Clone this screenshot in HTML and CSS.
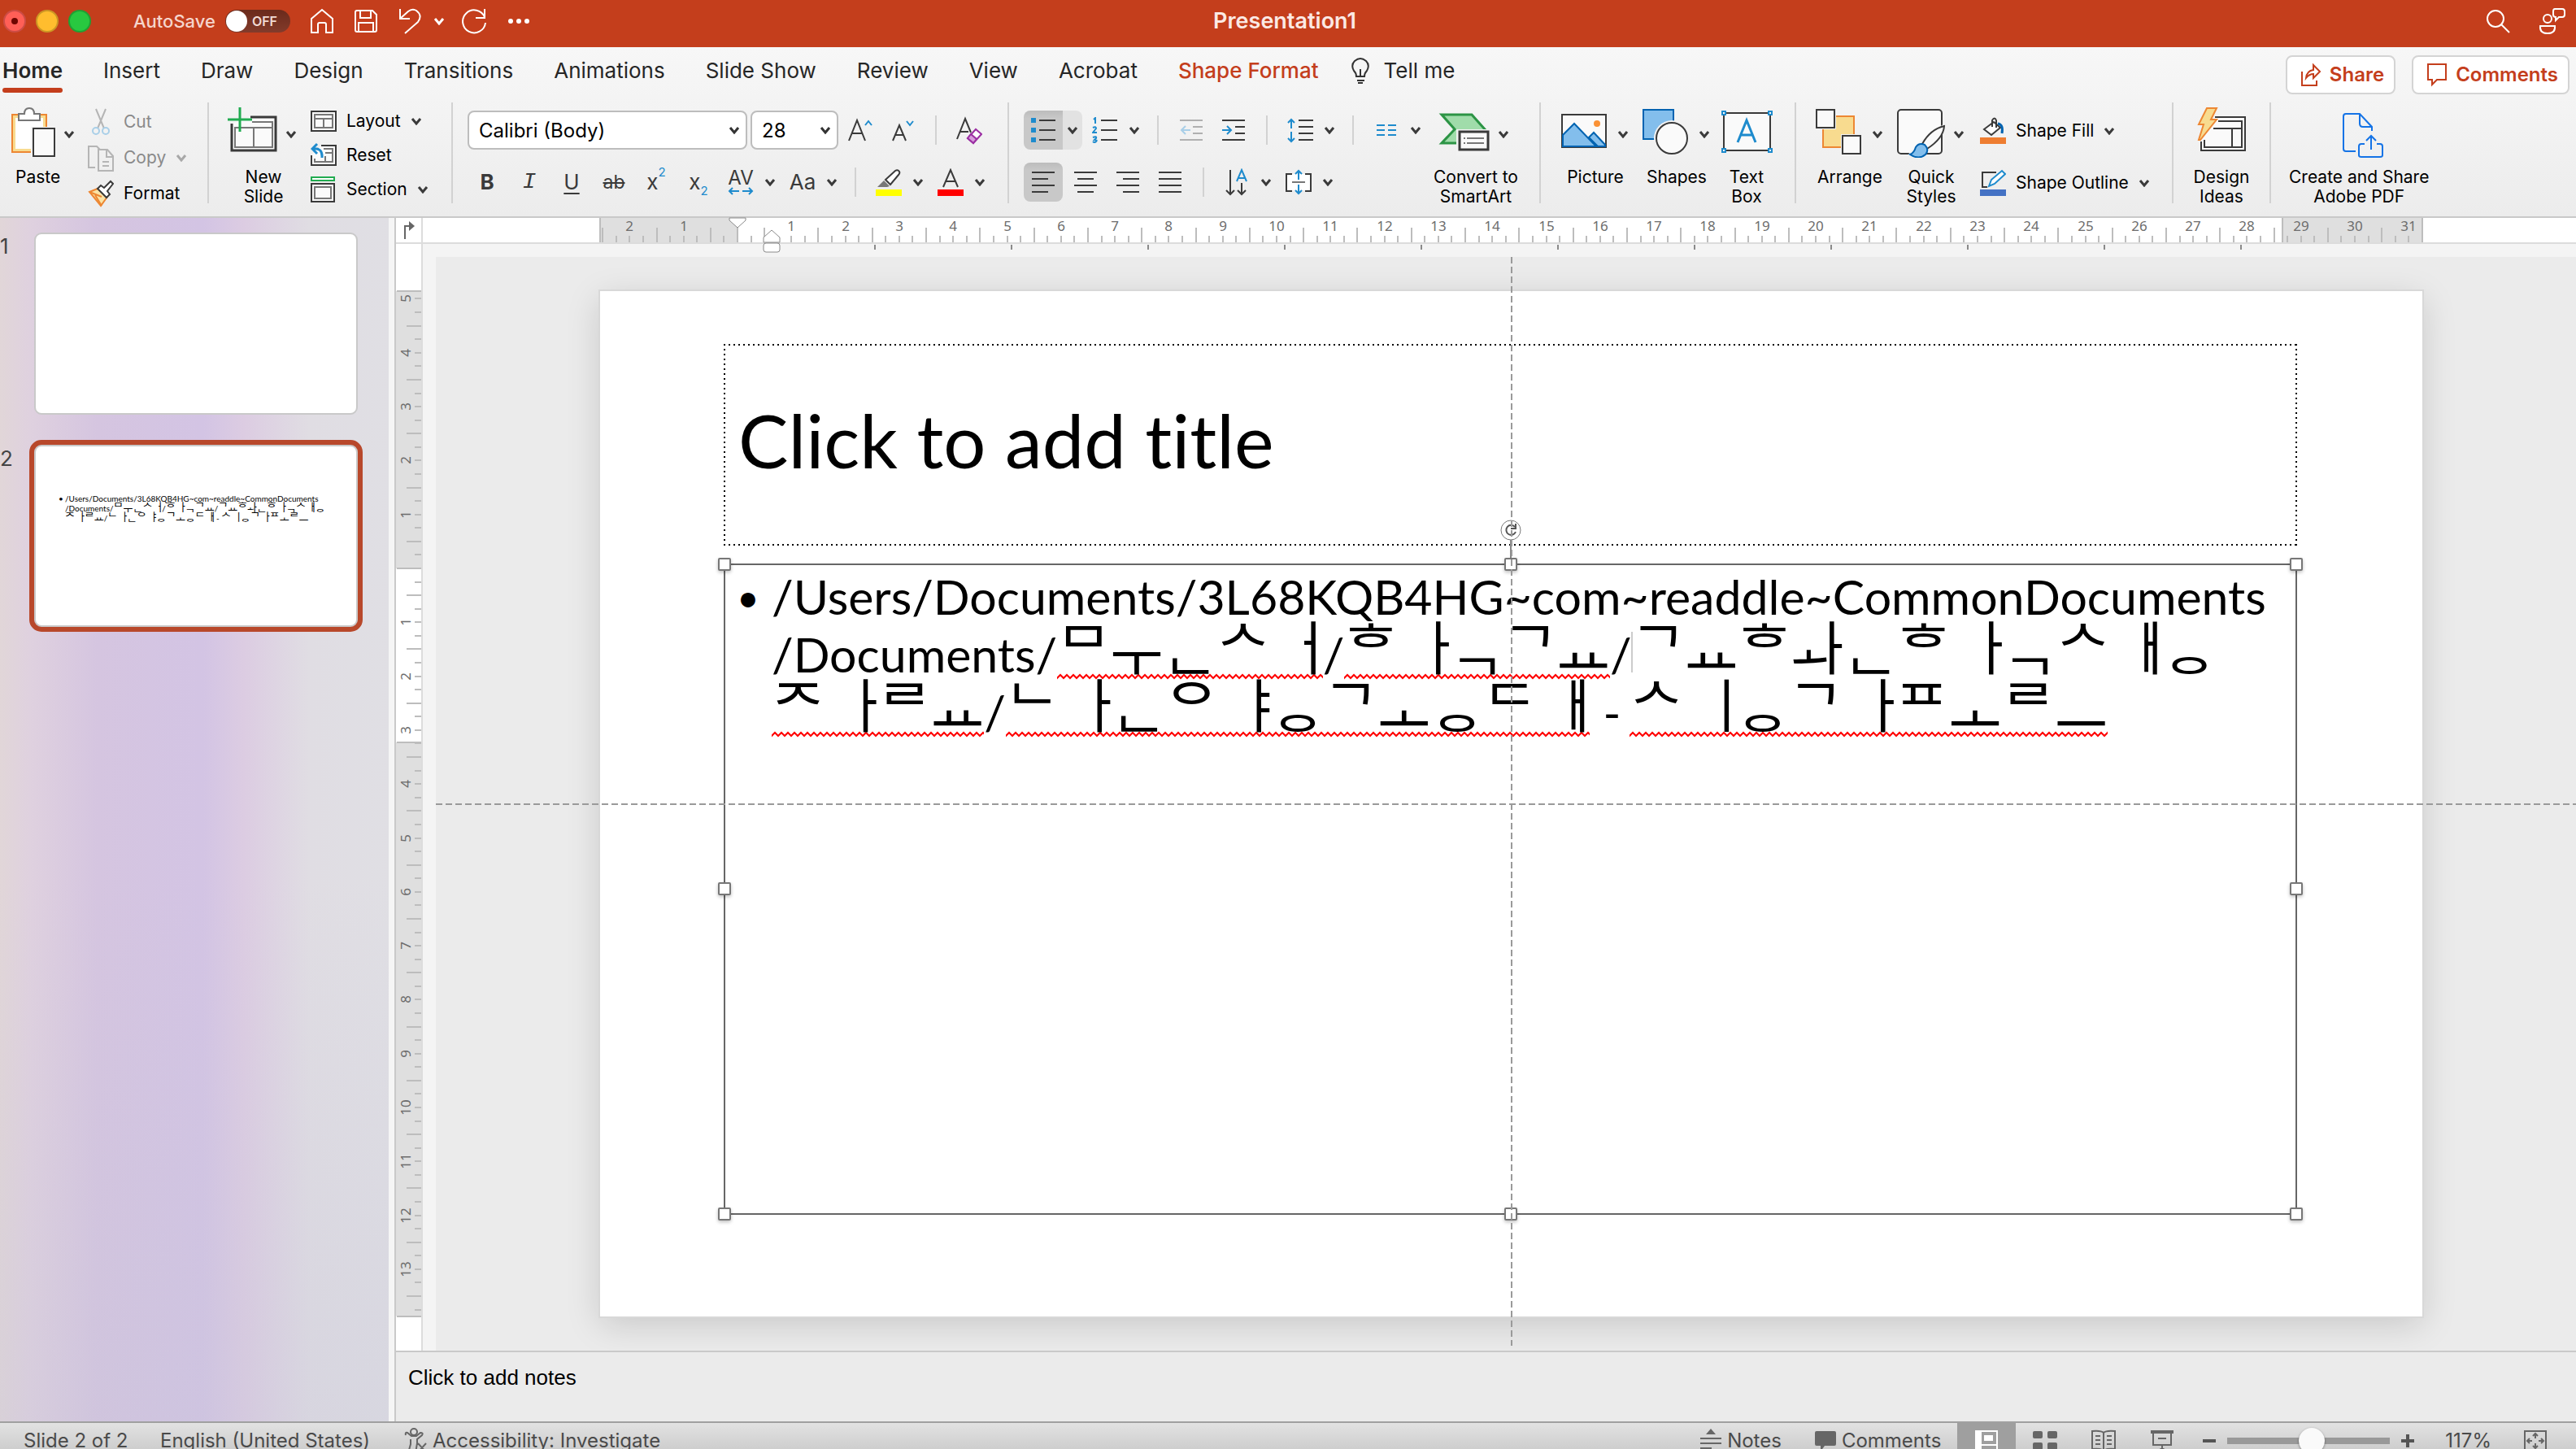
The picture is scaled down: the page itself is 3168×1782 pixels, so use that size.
FILE: index.html
```html
<!DOCTYPE html>
<html lang="en">
<head>
  <meta charset="UTF-8">
  <meta name="viewport" content="width=device-width, initial-scale=1.0">
  <title>Presentation1</title>
  <link rel="stylesheet" href="styles.css">
</head>
<body>

<svg class="defs" width="0" height="0" aria-hidden="true">
  <symbol id="chev" viewBox="0 0 14 10"><path d="M2 2l5 6 5-6" fill="none" stroke="currentColor" stroke-width="3"/></symbol>
</svg>

<div class="app">

  <header class="titlebar">
    <div class="titlebar-side">
      <div class="lights">
        <span class="light light-close"></span>
        <span class="light light-min"></span>
        <span class="light light-max"></span>
      </div>
      <label class="autosave" for="autosave">AutoSave
        <span class="switch"><input type="checkbox" id="autosave"><span class="switch-knob"></span><span class="switch-text">OFF</span></span>
      </label>
      <div class="quick">
        <button type="button" aria-label="Home"><svg width="30" height="34" viewBox="0 0 30 34"><path d="M2 14L15 3l13 11v17h-8V21q0-2-2-2h-6q-2 0-2 2v10H2z"/></svg></button>
        <button type="button" aria-label="Save"><svg width="30" height="34" viewBox="0 0 30 34"><path d="M4 4h19l5 5v19q0 2-2 2H4q-2 0-2-2V6q0-2 2-2zM8 4v9h13V4M6 30V19h18v11"/></svg></button>
        <button type="button" aria-label="Undo"><svg width="30" height="34" viewBox="0 0 30 34"><path d="M3 2v12h12M3 14L13 5q5-4 10-1 8 6 2 14L9 32"/></svg></button>
        <button type="button" class="quick-chev" aria-label="Undo list"><svg width="14" height="10"><use href="#chev"/></svg></button>
        <button type="button" aria-label="Redo"><svg width="34" height="34" viewBox="0 0 34 34"><path d="M30 2v11H19M30 12A14 14 0 1 0 31 19"/></svg></button>
        <button type="button" aria-label="More"><svg width="28" height="34" viewBox="0 0 28 34"><g fill="#fff" stroke="none"><circle cx="4" cy="17" r="3"/><circle cx="14" cy="17" r="3"/><circle cx="24" cy="17" r="3"/></g></svg></button>
      </div>
    </div>
    <h1 class="titlebar-name">Presentation1</h1>
    <div class="titlebar-side titlebar-right">
      <button type="button" aria-label="Search"><svg width="32" height="34" viewBox="0 0 32 34"><circle cx="13" cy="14" r="10"/><path d="M20 21l10 10"/></svg></button>
      <button type="button" aria-label="Presence"><svg width="34" height="36" viewBox="0 0 34 36"><circle cx="11" cy="15" r="5"/><path d="M2 24h18q1 9-9 9T2 24zM20 3h9q3 0 3 3v4q0 3-3 3h-4l-4 4v-4q-3 0-3-3V6q0-3 2-3z"/></svg></button>
    </div>
  </header>

  <nav class="tabs">
    <a href="#" class="tab tab-active">Home</a>
    <a href="#" class="tab">Insert</a>
    <a href="#" class="tab">Draw</a>
    <a href="#" class="tab">Design</a>
    <a href="#" class="tab">Transitions</a>
    <a href="#" class="tab">Animations</a>
    <a href="#" class="tab">Slide Show</a>
    <a href="#" class="tab">Review</a>
    <a href="#" class="tab">View</a>
    <a href="#" class="tab">Acrobat</a>
    <a href="#" class="tab tab-context">Shape Format</a>
    <a href="#" class="tab tab-tell"><svg width="22" height="34" viewBox="0 0 22 34" fill="none" stroke="#333" stroke-width="2"><path d="M6 24q0-4-3-7-4-7 1-12 7-6 14 0 5 5 1 12-3 3-3 7zM7 29h9M8 32h6M11 23v-8"/></svg>Tell me</a>
    <div class="tabs-actions">
      <button type="button" class="action"><svg width="26" height="30" viewBox="0 0 26 30"><path d="M2 11v17h18v-6M7 19q1-9 9-10V3l8 8-8 8v-5q-5 0-9 5z"/></svg>Share</button>
      <button type="button" class="action"><svg width="26" height="30" viewBox="0 0 26 30"><path d="M2 2h22v19H13l-6 6v-6H2z"/></svg>Comments</button>
    </div>
  </nav>

  <div class="ribbon">
    <section class="group group-clip">
      <button type="button" class="big paste">
        <span class="big-top">
          <svg width="56" height="64" viewBox="0 0 56 64" fill="#fff" stroke-width="2"><path d="M2 11h42v46H2z" fill="#f8db8f" stroke="#ed8733"/><path d="M6 15h34v38H6z" stroke="none"/><path d="M10 18v-8h7q0-7 6-7t6 7h7v8z" stroke="#777"/><path d="M25 26h31v38H25z" fill="#f3f3f3" stroke="none"/><path d="M28 28h26v34H28z" fill="#fafafa" stroke="#3a3a3a"/></svg>
          <svg class="chev" width="14" height="10"><use href="#chev"/></svg>
        </span>
        <span>Paste</span>
      </button>
      <div class="stack">
        <button type="button" class="line" disabled><svg width="32" height="36" viewBox="0 0 32 36" fill="none" stroke="#b5b5b5" stroke-width="2"><path d="M10 2l10 24M22 2L12 26"/><g stroke="#a9cfe8"><circle cx="10" cy="29" r="4"/><circle cx="22" cy="29" r="4"/></g></svg>Cut</button>
        <button type="button" class="line" disabled><svg width="32" height="36" viewBox="0 0 32 36" fill="none" stroke="#b5b5b5" stroke-width="2"><path d="M9 30H1V4h10l4 4M13 8h11l7 8v18H13zM23 8v9h8M18 23h8M18 28h8"/></svg>Copy<svg class="chev" width="14" height="10"><use href="#chev"/></svg></button>
        <button type="button" class="line"><svg width="32" height="36" viewBox="0 0 32 36" fill="#fff" stroke-width="2"><path d="M2 16l10-4 12 10-8 11z" fill="#fbe3a5" stroke="#ed8733"/><path d="M2 16l15 6M9 20l8 13" stroke="#ed8733"/><path d="M12 12l4-4 4 3 8-8 3 3-7 9 3 4-4 4z" stroke="#3a3a3a"/></svg>Format</button>
      </div>
    </section>

    <section class="group group-slides">
      <button type="button" class="big">
        <span class="big-top">
          <svg width="64" height="64" viewBox="0 0 64 64" fill="none" stroke-width="2"><path d="M30 14h31v41H7V22" fill="#fafafa" stroke="#3a3a3a" stroke-width="3"/><path d="M32 20h25v31H11V27h46M34 27v24" stroke="#777"/><path d="M17 2v30M2 17h30" stroke="#21ab50" stroke-width="3"/></svg>
          <svg class="chev" width="14" height="10"><use href="#chev"/></svg>
        </span>
        <span>New<br>Slide</span>
      </button>
      <div class="stack">
        <button type="button" class="line"><svg width="32" height="32" viewBox="0 0 32 32" fill="none" stroke="#777" stroke-width="2"><path d="M1 4h30v24H1z" fill="#fafafa" stroke="#3a3a3a"/><path d="M5 8h22v16H5zM5 13h22M16 13v11"/></svg>Layout<svg class="chev" width="14" height="10"><use href="#chev"/></svg></button>
        <button type="button" class="line"><svg width="32" height="32" viewBox="0 0 32 32" fill="none" stroke="#777" stroke-width="2"><path d="M13 4h18v24H1V16" fill="#fafafa" stroke="#3a3a3a"/><path d="M5 20v4h22V8H16M18 13h9M18 17v7"/><path d="M8 2L2 8l6 6M2 8q13-2 12 11" stroke="#1e8bcd" stroke-width="3"/></svg>Reset</button>
        <button type="button" class="line"><svg width="32" height="32" viewBox="0 0 32 32" fill="none" stroke="#777" stroke-width="2"><path d="M1 1h28v4H1z" fill="#fff" stroke="#21ab50"/><path d="M1 9h28v22H1z" fill="#fafafa" stroke="#3a3a3a"/><path d="M5 13h20v14H5z"/></svg>Section<svg class="chev" width="14" height="10"><use href="#chev"/></svg></button>
      </div>
    </section>

    <section class="group group-font">
      <div class="tools">
        <select class="combo combo-font" aria-label="Font"><option>Calibri (Body)</option></select>
        <select class="combo combo-size" aria-label="Font size"><option>28</option></select>
        <button type="button" class="tool" aria-label="Grow font"><svg width="32" height="32" viewBox="0 0 32 32" fill="none" stroke="#3a3a3a" stroke-width="2"><path d="M2 29L12 4l10 25M6 20h12"/><path d="M22 10l4-5 4 5" stroke="#1e8bcd"/></svg></button>
        <button type="button" class="tool" aria-label="Shrink font"><svg width="32" height="32" viewBox="0 0 32 32" fill="none" stroke="#3a3a3a" stroke-width="2"><path d="M4 29l8-19 8 19M7 22h10"/><path d="M21 5l4 5 4-5" stroke="#1e8bcd"/></svg></button>
        <span class="sep"></span>
        <button type="button" class="tool" aria-label="Clear formatting"><svg width="32" height="36" viewBox="0 0 32 36" fill="none" stroke="#3a3a3a" stroke-width="2"><path d="M1 29L11 4l7 17M5 20h10"/><path d="M14 28l10-11 7 6-10 11z" fill="#fff" stroke="#9b2fa3"/><path d="M14 28l4-5 7 6-4 5z" fill="#d69bdb" stroke="#9b2fa3"/></svg></button>
      </div>
      <div class="tools">
        <button type="button" class="tool glyph"><b>B</b></button>
        <button type="button" class="tool glyph glyph-i">I</button>
        <button type="button" class="tool glyph"><u>U</u></button>
        <button type="button" class="tool glyph glyph-s"><s>ab</s></button>
        <button type="button" class="tool glyph">x<sup>2</sup></button>
        <button type="button" class="tool glyph">x<sub>2</sub></button>
        <div class="split">
          <button type="button" class="tool glyph glyph-av">AV<svg width="32" height="10" viewBox="0 0 32 10" fill="none" stroke="#1e8bcd" stroke-width="2"><path d="M14 5H2M6 1L2 5l4 4M18 5h12M26 1l4 4-4 4"/></svg></button>
          <button type="button" class="drop" aria-label="Spacing options"><svg width="14" height="10"><use href="#chev"/></svg></button>
        </div>
        <div class="split">
          <button type="button" class="tool glyph glyph-aa">Aa</button>
          <button type="button" class="drop" aria-label="Case options"><svg width="14" height="10"><use href="#chev"/></svg></button>
        </div>
        <span class="sep"></span>
        <div class="split">
          <button type="button" class="tool" aria-label="Highlight"><svg width="32" height="34" viewBox="0 0 32 34"><path d="M0 26h32v8H0z" fill="#ff0"/><path d="M12 14L24 3q3-2 5 1 1 2-1 4L18 20z" fill="#fff" stroke="#3a3a3a" stroke-width="2"/><path d="M2 23l8-8 7 7-3 1z" fill="#777"/></svg></button>
          <button type="button" class="drop" aria-label="Highlight options"><svg width="14" height="10"><use href="#chev"/></svg></button>
        </div>
        <div class="split">
          <button type="button" class="tool" aria-label="Font colour"><svg width="32" height="34" viewBox="0 0 32 34"><path d="M0 26h32v8H0z" fill="red"/><path d="M7 23l9-21 9 21M10 16h12" fill="none" stroke="#3a3a3a" stroke-width="2"/></svg></button>
          <button type="button" class="drop" aria-label="Font colour options"><svg width="14" height="10"><use href="#chev"/></svg></button>
        </div>
      </div>
    </section>

    <section class="group group-para">
      <div class="rows">
        <div class="tools">
          <div class="split split-on">
            <button type="button" class="tool tool-on" aria-label="Bullets"><svg width="32" height="32" viewBox="0 0 32 32"><path d="M1 1h6v6H1zM1 13h6v6H1zM1 25h6v6H1z" fill="#1e8bcd"/><path d="M11 4h20M11 16h20M11 28h20" stroke="#3a3a3a" stroke-width="2"/></svg></button>
            <button type="button" class="drop" aria-label="Bullet options"><svg width="14" height="10"><use href="#chev"/></svg></button>
          </div>
          <div class="split">
            <button type="button" class="tool" aria-label="Numbering"><svg width="32" height="32" viewBox="0 0 32 32"><path d="M2 3l2-2v7M1 13q4-2 4 1l-4 5h5M1 25q5-2 4 1l-2 2q4 0 2 2t-4 0" fill="none" stroke="#1e8bcd" stroke-width="2"/><path d="M11 4h20M11 16h20M11 28h20" stroke="#3a3a3a" stroke-width="2"/></svg></button>
            <button type="button" class="drop" aria-label="Numbering options"><svg width="14" height="10"><use href="#chev"/></svg></button>
          </div>
          <span class="sep"></span>
          <button type="button" class="tool" disabled aria-label="Decrease indent"><svg width="28" height="32" viewBox="0 0 28 32" fill="none" stroke="#b0b0b0" stroke-width="2"><path d="M0 4h28M16 12h12M16 20h12M0 28h28"/><path d="M13 16H2M7 11l-5 5 5 5" stroke="#a9cfe8"/></svg></button>
          <button type="button" class="tool" aria-label="Increase indent"><svg width="28" height="32" viewBox="0 0 28 32" fill="none" stroke="#3a3a3a" stroke-width="2"><path d="M0 4h28M16 12h12M16 20h12M0 28h28"/><path d="M0 16h11M6 11l5 5-5 5" stroke="#1e8bcd"/></svg></button>
          <span class="sep"></span>
          <div class="split">
            <button type="button" class="tool" aria-label="Line spacing"><svg width="32" height="32" viewBox="0 0 32 32" fill="none" stroke="#3a3a3a" stroke-width="2"><path d="M14 4h18M14 12h18M14 20h18M14 28h18"/><path d="M5 14V3M1 7l4-4 4 4M5 18v12M1 26l4 4 4-4" stroke="#1e8bcd"/></svg></button>
            <button type="button" class="drop" aria-label="Line spacing options"><svg width="14" height="10"><use href="#chev"/></svg></button>
          </div>
          <span class="sep"></span>
          <div class="split">
            <button type="button" class="tool" aria-label="Columns"><svg width="24" height="16" viewBox="0 0 24 16" stroke="#1e8bcd" stroke-width="2"><path d="M0 2h10M14 2h10M0 8h10M14 8h10M0 14h10M14 14h10"/></svg></button>
            <button type="button" class="drop" aria-label="Column options"><svg width="14" height="10"><use href="#chev"/></svg></button>
          </div>
        </div>
        <div class="tools">
          <button type="button" class="tool tool-on" aria-label="Align left"><svg width="28" height="28" viewBox="0 0 28 28" stroke="#3a3a3a" stroke-width="2"><path d="M0 2h28M0 10h20M0 18h28M0 26h20"/></svg></button>
          <button type="button" class="tool" aria-label="Center"><svg width="28" height="28" viewBox="0 0 28 28" stroke="#3a3a3a" stroke-width="2"><path d="M0 2h28M4 10h20M0 18h28M4 26h20"/></svg></button>
          <button type="button" class="tool" aria-label="Align right"><svg width="28" height="28" viewBox="0 0 28 28" stroke="#3a3a3a" stroke-width="2"><path d="M0 2h28M8 10h20M0 18h28M8 26h20"/></svg></button>
          <button type="button" class="tool" aria-label="Justify"><svg width="28" height="28" viewBox="0 0 28 28" stroke="#3a3a3a" stroke-width="2"><path d="M0 2h28M0 10h28M0 18h28M0 26h28"/></svg></button>
          <span class="sep"></span>
          <div class="split">
            <button type="button" class="tool" aria-label="Text direction"><svg width="28" height="34" viewBox="0 0 28 34" fill="none" stroke="#3a3a3a" stroke-width="2"><path d="M6 2v29M1 27l5 5 5-5M20 18v13M15 27l5 5 5-5"/><path d="M14 16l6-14 6 14M16 12h8" stroke="#1e8bcd"/></svg></button>
            <button type="button" class="drop" aria-label="Text direction options"><svg width="14" height="10"><use href="#chev"/></svg></button>
          </div>
          <div class="split">
            <button type="button" class="tool" aria-label="Align text"><svg width="32" height="34" viewBox="0 0 32 34" fill="none" stroke="#3a3a3a" stroke-width="2"><path d="M2 7h28v20H2z" fill="#fff" stroke="none"/><path d="M8 7H1v21h7M24 7h7v21h-7"/><path d="M8 17h16" stroke="#777"/><path d="M16 14V3M12 7l4-4 4 4M16 20v11M12 27l4 4 4-4" stroke="#1e8bcd"/></svg></button>
            <button type="button" class="drop" aria-label="Align text options"><svg width="14" height="10"><use href="#chev"/></svg></button>
          </div>
        </div>
      </div>
      <button type="button" class="big big-art">
        <span class="big-top">
          <svg width="64" height="64" viewBox="0 0 64 64" fill="#fafafa" stroke-width="2"><path d="M4 11h37l16 18-16 17H4l16-17z" fill="#a0dcaa" stroke="#2c9445" stroke-width="3"/><path d="M22 29h42v32H22z" fill="#f2f2f2" stroke="none"/><path d="M26 32h35v22H26z" stroke="#3a3a3a" stroke-width="3"/><path d="M31 40h2M35 40h21M31 46h2M35 46h21" stroke="#777"/></svg>
          <svg class="chev" width="14" height="10"><use href="#chev"/></svg>
        </span>
        <span>Convert to<br>SmartArt</span>
      </button>
    </section>

    <section class="group group-insert">
      <button type="button" class="big">
        <span class="big-top">
          <svg width="64" height="64" viewBox="0 0 64 64" fill="#fafafa" stroke-width="2"><path d="M5 11h54v40H5z" stroke="#3a3a3a"/><path d="M6 36l14-14 27 28H6zM38 39l6-6 14 15v2H49z" fill="#83beec" stroke="#0063b1"/><circle cx="48" cy="22" r="4" fill="#fa9236"/></svg>
          <svg class="chev" width="14" height="10"><use href="#chev"/></svg>
        </span>
        <span>Picture</span>
      </button>
      <button type="button" class="big">
        <span class="big-top">
          <svg width="64" height="64" viewBox="0 0 64 64" fill="#fafafa" stroke-width="2"><path d="M5 5h37v36H5z" fill="#83beec" stroke="#0063b1"/><circle cx="40" cy="40" r="22" fill="#f2f2f2"/><circle cx="40" cy="40" r="19" stroke="#3a3a3a"/></svg>
          <svg class="chev" width="14" height="10"><use href="#chev"/></svg>
        </span>
        <span>Shapes</span>
      </button>
      <button type="button" class="big">
        <span class="big-top">
          <svg width="64" height="64" viewBox="0 0 64 64" fill="#fafafa" stroke-width="2"><path d="M4 9h57v46H4z" stroke="#3a3a3a"/><path d="M21 45l11-27 11 27M25 36h14" fill="none" stroke="#1e8bcd" stroke-width="3"/><path d="M2 7h4v4H2zM59 7h4v4h-4zM2 53h4v4H2zM59 53h4v4h-4z" stroke="#1e8bcd"/></svg>
        </span>
        <span>Text<br>Box</span>
      </button>
    </section>

    <section class="group group-arrange">
      <button type="button" class="big">
        <span class="big-top">
          <svg width="64" height="64" viewBox="0 0 64 64" fill="#fafafa" stroke-width="2"><path d="M13 13h38v38H13z" fill="#f8db8f" stroke="#ed8733"/><path d="M2 2h27v27H2zM35 35h27v27H35z" fill="#f2f2f2"/><path d="M5 5h22v22H5zM37 37h22v22H37z" stroke="#3a3a3a"/></svg>
          <svg class="chev" width="14" height="10"><use href="#chev"/></svg>
        </span>
        <span>Arrange</span>
      </button>
      <button type="button" class="big">
        <span class="big-top">
          <svg width="64" height="64" viewBox="0 0 64 64" fill="#fafafa" stroke-width="2"><rect x="5" y="5" width="54" height="54" rx="4" stroke="#3a3a3a"/><path d="M64 24L36 60 16 62l16-18 30-22z" fill="#f2f2f2"/><path d="M35 47q10-18 27-22-1 15-21 28z" stroke="#3a3a3a"/><path d="M20 60q5-2 7-9 4-6 11-3 6 6 1 12-8 7-19 0z" fill="#83beec" stroke="#0063b1"/></svg>
          <svg class="chev" width="14" height="10"><use href="#chev"/></svg>
        </span>
        <span>Quick<br>Styles</span>
      </button>
      <div class="stack stack-shape">
        <button type="button" class="line"><svg width="32" height="34" viewBox="0 0 32 34" fill="#fff" stroke="#3a3a3a" stroke-width="2"><path d="M0 25h32v8H0z" fill="#ee7d31" stroke="none"/><path d="M5 15L17 6l8 7-11 9zM15 12V4q3-5 5 0v9"/><path d="M22 8q7 1 5 12" fill="none" stroke="#0063b1" stroke-width="3"/></svg>Shape Fill<svg class="chev" width="14" height="10"><use href="#chev"/></svg></button>
        <button type="button" class="line"><svg width="32" height="34" viewBox="0 0 32 34" fill="none" stroke="#3a3a3a" stroke-width="2"><path d="M0 25h32v8H0z" fill="#4472c4" stroke="none"/><path d="M20 4H3v18h6"/><path d="M11 21l3-8L27 2l4 4-13 12z" fill="#fff" stroke="#1e8bcd"/></svg>Shape Outline<svg class="chev" width="14" height="10"><use href="#chev"/></svg></button>
      </div>
    </section>

    <section class="group group-ideas">
      <button type="button" class="big">
        <span class="big-top">
          <svg width="64" height="64" viewBox="0 0 64 64" fill="none" stroke="#3a3a3a" stroke-width="2"><path d="M24 14h37v41H7V44" fill="#fafafa"/><path d="M28 19h29v32H11V42M22 28h35M45 28v23"/><path d="M14 3h12l-7 14h7L6 42H4l6-19H4z" fill="#f8db8f" stroke="#ed8733"/></svg>
        </span>
        <span>Design<br>Ideas</span>
      </button>
    </section>

    <section class="group group-pdf">
      <button type="button" class="big">
        <span class="big-top">
          <svg width="64" height="64" viewBox="0 0 64 64" fill="none" stroke="#1473e6" stroke-width="2"><path d="M28 56H16q-3 0-3-3V13q0-3 3-3h17l15 16v5M33 10v12q0 4 4 4h11M39 47h-4q-3 0-3 3v11q0 2 3 2h23q3 0 3-2V50q0-3-3-3h-4M47 54V37M41 43l6-6 6 6"/></svg>
        </span>
        <span>Create and Share<br>Adobe PDF</span>
      </button>
    </section>
  </div>

  <main class="main">
    <aside class="sidebar">
      <ol class="slides">
        <li><span class="slide-no">1</span><div class="thumb"></div></li>
        <li><span class="slide-no">2</span><div class="thumb thumb-on"><p class="path" id="thumb-text"></p></div></li>
      </ol>
    </aside>

    <div class="editor">
      <div class="corner"><svg width="16" height="22" viewBox="0 0 16 22"><path d="M3 22V6h6" fill="none" stroke="#666" stroke-width="2"/><path d="M8 0l7 6-7 6z" fill="#666"/></svg></div>
      <svg class="ruler ruler-h" id="ruler-h"></svg>
      <svg class="ruler ruler-v" id="ruler-v"></svg>
      <div class="stage">
        <div class="canvas">
          <div class="slide" id="slide">
            <div class="holder holder-title"><h2>Click to add title</h2></div>
            <div class="holder holder-body" id="holder">
              <p class="path" id="path"><span>/Users/Documents/3L68KQB4HG~com~readdle~CommonDocuments</span><br><span>/Documents/<i class="jamo typo">&#x1106;&#x1160;&#x115F;&#x116E;&#x115F;&#x1160;&#x11AB;&#x1109;&#x1160;&#x115F;&#x1165;</i>/<i class="jamo typo">&#x1112;&#x1160;&#x115F;&#x1161;&#x115F;&#x1160;&#x11A8;&#x1100;&#x1160;&#x115F;&#x116D;</i>/<i class="caret"></i><i class="jamo">&#x1100;&#x1160;&#x115F;&#x116D;&#x1112;&#x1160;&#x115F;&#x116A;&#x115F;&#x1160;&#x11AB;&#x1112;&#x1160;&#x115F;&#x1161;&#x115F;&#x1160;&#x11A8;&#x1109;&#x1160;&#x115F;&#x1162;&#x115F;&#x1160;&#x11BC;</i></span><br><span><i class="jamo typo">&#x110C;&#x1160;&#x115F;&#x1161;&#x1105;&#x1160;&#x115F;&#x116D;</i>/<i class="jamo typo">&#x1102;&#x1160;&#x115F;&#x1161;&#x115F;&#x1160;&#x11AB;&#x110B;&#x1160;&#x115F;&#x1163;&#x115F;&#x1160;&#x11BC;&#x1100;&#x1160;&#x115F;&#x1169;&#x115F;&#x1160;&#x11BC;&#x1103;&#x1160;&#x115F;&#x1162;</i><i class="dash">-</i><i class="jamo typo">&#x1109;&#x1160;&#x115F;&#x1175;&#x115F;&#x1160;&#x11BC;&#x1100;&#x1160;&#x115F;&#x1161;&#x1111;&#x1160;&#x115F;&#x1169;&#x1105;&#x1160;&#x115F;&#x1173;</i></span></p>
              <span class="stem"></span>
              <span class="grip grip-nw"></span><span class="grip grip-n"></span><span class="grip grip-ne"></span>
              <span class="grip grip-w"></span><span class="grip grip-e"></span>
              <span class="grip grip-sw"></span><span class="grip grip-s"></span><span class="grip grip-se"></span>
              <svg class="rotate" width="26" height="26" viewBox="0 0 26 26"><circle cx="13" cy="13" r="12" fill="#fff" stroke="#777"/><path d="M18 9a6 6 0 1 0 1 6M19 5v6h-6" fill="none" stroke="#555" stroke-width="2"/></svg>
            </div>
          </div>
          <span class="guide guide-v"></span>
          <span class="guide guide-h"></span>
        </div>
      </div>
      <div class="notes">
        <textarea aria-label="Notes" rows="1">Click to add notes</textarea>
      </div>
    </div>
  </main>

  <footer class="status">
    <span class="status-slide">Slide 2 of 2</span>
    <button type="button" class="status-lang">English (United States)</button>
    <button type="button" class="status-a11y"><svg width="28" height="32" viewBox="0 0 28 32" fill="none" stroke="#666" stroke-width="2"><circle cx="12" cy="5" r="4"/><path d="M2 9q-1-4 2-3l5 4h6l5-4q4 0 2 3l-6 5v5l-2 12M8 14v6L5 31M17 19l10 11M27 19L17 30"/></svg>Accessibility: Investigate</button>
    <div class="status-right">
      <button type="button" class="status-notes"><svg width="28" height="30" viewBox="0 0 28 30"><path d="M14 0l6 7H8z" fill="#666"/><path d="M1 12h26M1 18h26M1 24h14" stroke="#666" stroke-width="2"/></svg>Notes</button>
      <button type="button" class="status-comments"><svg width="28" height="26" viewBox="0 0 28 26"><path d="M3 1h22q2 0 2 2v14q0 2-2 2H13l-5 7v-7H3q-2 0-2-2V3q0-2 2-2z" fill="#666"/></svg>Comments</button>
      <div class="views">
        <button type="button" class="view view-on" aria-label="Normal view"><svg width="30" height="26" viewBox="0 0 30 26" fill="none" stroke="#fff" stroke-width="2"><path d="M2 1h26v24H2zM8 1v24M8 18h20"/><path d="M2 1h5v24H2zM13 7h9v5h-9z" fill="#fff"/></svg></button>
        <button type="button" class="view" aria-label="Slide sorter"><svg width="30" height="26" viewBox="0 0 30 26" fill="#666"><rect y="1" width="12" height="9" rx="2"/><rect x="18" y="1" width="12" height="9" rx="2"/><rect y="15" width="12" height="9" rx="2"/><rect x="18" y="15" width="12" height="9" rx="2"/></svg></button>
        <button type="button" class="view" aria-label="Reading view"><svg width="30" height="28" viewBox="0 0 30 28" fill="none" stroke="#666" stroke-width="2"><path d="M15 4q-3-3-14-2v22q11-1 14 2 3-3 14-2V2Q18 1 15 4zv22M5 8h6M5 13h6M5 18h6M19 8h6M19 13h6M19 18h6"/></svg></button>
        <button type="button" class="view" aria-label="Slide show"><svg width="30" height="28" viewBox="0 0 30 28" fill="none" stroke="#666" stroke-width="2"><path d="M1 3h28" stroke-width="4"/><path d="M4 4v15h22V4M10 11h10M15 19v6M9 27l6-4 6 4"/></svg></button>
      </div>
      <button type="button" class="zoom-btn" aria-label="Zoom out"><svg width="16" height="16" viewBox="0 0 16 16"><path d="M0 8h16" stroke="#555" stroke-width="4"/></svg></button>
      <input type="range" class="zoom" min="0" max="100" value="52" aria-label="Zoom">
      <button type="button" class="zoom-btn" aria-label="Zoom in"><svg width="16" height="16" viewBox="0 0 16 16"><path d="M0 8h16M8 0v16" stroke="#555" stroke-width="4"/></svg></button>
      <button type="button" class="zoom-level">117%</button>
      <button type="button" class="zoom-fit" aria-label="Fit to window"><svg width="28" height="26" viewBox="0 0 28 26" fill="none" stroke="#666" stroke-width="2"><path d="M1 1h26v24H1zM14 5v5M14 16v5M5 13h5M18 13h5"/><path d="M11 7l3-3 3 3M11 19l3 3 3-3M7 10l-3 3 3 3M21 10l3 3-3 3"/></svg></button>
    </div>
  </footer>

</div>

<script src="script.js"></script>
</body>
</html>
```
FILE: styles.css
```css
*{box-sizing: border-box;}
html,body{margin: 0; padding: 0; height: 100%; overflow: hidden;}
body{font-family: Inter, "Liberation Sans", sans-serif; font-size: 22px; line-height: 24px; color: #000; background-color: #ebebeb;}
button{margin: 0; padding: 0; border: 0; background: none; font: inherit; color: inherit; white-space: nowrap;}
svg{display: block; flex: none;}
a{color: inherit; text-decoration: none;}
.defs{position: absolute;}

/* the status bar runs a little below the window edge */
.app{display: flex; flex-direction: column; height: calc(100% + 12px);}

/* title bar */
.titlebar{display: flex; align-items: center; height: 58px; padding: 0 12px 6px 4px; background-color: #c43e1c; color: #fff;}
.titlebar svg{fill: none; stroke: #fff; stroke-width: 2;}
.titlebar-side{display: flex; flex: 1; align-items: center;}
.titlebar-right{justify-content: flex-end; gap: 34px;}
.titlebar-name{margin: 0; font-size: 27px; font-weight: 600; color: #fbe9e4;}
.lights{display: flex; gap: 12px;}
.light{display: flex; width: 28px; height: 28px; border: 2px solid rgba(0,0,0,0.2); border-radius: 50%; align-items: center; justify-content: center;}
.light-close{background-color: #ff5f57;}
.light-close::after{content: ""; width: 8px; height: 8px; border-radius: 50%; background-color: #6e0600;}
.light-min{background-color: #ffbd2e;}
.light-max{background-color: #28c840;}
.autosave{display: flex; align-items: center; gap: 12px; margin-left: 52px; font-size: 22px; font-weight: 500; color: #f5d5cc;}
.switch{display: flex; position: relative; align-items: center; width: 80px; height: 28px; border-radius: 14px; background: linear-gradient(#6b2a1b, #823b2b);}
.switch input{position: absolute; inset: 0; margin: 0; opacity: 0;}
.switch-knob{width: 26px; height: 26px; margin-left: 1px; border-radius: 50%; background-color: #fff;}
.switch-text{margin-left: 6px; font-size: 16px; font-weight: 600; color: #f1dad4;}
.quick{display: flex; align-items: center; gap: 24px; margin-left: 24px;}
.quick-chev{margin: 0 -5px 0 -10px;}

/* tabs */
.tabs{display: flex; align-items: center; gap: 50px; height: 62px; padding: 0 8px 4px 3px; background: linear-gradient(#f7f7f7, #f4f4f4); font-size: 26px; line-height: 30px; color: #262626;}
.tab{display: flex; align-items: center; white-space: nowrap;}
.tab-active{position: relative; font-weight: 600;}
.tab-active::after{content: ""; position: absolute; left: 0; right: 0; bottom: -12px; height: 6px; border-radius: 3px; background-color: #c43e1c;}
.tab-context{font-weight: 500; color: #c43e1c;}
.tab-tell{gap: 18px; margin-left: -10px;}
.tabs-actions{display: flex; gap: 20px; margin-left: auto; align-self: flex-end;}
.action{display: flex; align-items: center; gap: 10px; height: 48px; padding: 0 12px 0 16px; border: 2px solid #d4d4d4; border-radius: 8px; background-color: #fff; font-size: 24px; font-weight: 600; color: #c43e1c;}
.action svg{fill: none; stroke: #c43e1c; stroke-width: 2;}

/* ribbon */
.ribbon{display: flex; height: 148px; padding: 6px 0 16px; border-bottom: 2px solid #c9c9c9; background: linear-gradient(#f4f4f4, #ececec);}
.group{display: flex; border-right: 2px solid #d2d2d2; padding-top: 4px;}
.group-clip{width: 257px; padding-left: 13px;}
.group-slides{width: 300px; padding-left: 21px;}
.group-font{width: 684px; padding: 10px 0 0 16px; flex-direction: column; gap: 16px;}
.group-para{width: 654px; padding-left: 16px;}
.group-insert{width: 314px; padding-left: 21px; gap: 8px;}
.group-arrange{width: 464px; padding-left: 20px; gap: 8px;}
.group-ideas{width: 120px; justify-content: center;}
.group-pdf{padding-left: 22px; border-right: 0;}
.big{display: flex; flex-direction: column; align-items: center; align-self: flex-start; gap: 12px; font-size: 21px;}
.big-top{display: flex; align-items: center; gap: 9px; height: 64px;}
.big .chev{margin: 6px 5px 0 0;}
.paste{align-items: flex-start; width: 84px; margin-right: 11px;}
.paste > span:last-child{padding-left: 6px;}
.chev,.drop{color: #3a3a3a;}
.stack{display: flex; flex-direction: column; gap: 8px; padding-top: 2px;}
.group-slides .stack{margin-left: 12px;}
.line{display: flex; align-items: center; gap: 12px; height: 36px; font-size: 21px;}
.line:disabled{color: #8a8a8a;}
.line:disabled .chev{color: #a8a8a8;}
.stack-shape{margin-left: 6px; padding-top: 13px; gap: 28px;}
.rows{display: flex; flex-direction: column; gap: 16px; width: 498px; padding-top: 6px;}
.big-art{margin-left: 8px;}
.tools{display: flex; align-items: center; height: 48px;}
.tool{display: flex; align-items: center; justify-content: center; width: 48px; height: 48px; margin: 0 2px; border-radius: 8px;}
.tool-on{background: linear-gradient(#bcbcbc, #c8c8c8 20%);}
.split{display: flex; margin-right: 2px;}
.split .tool{margin-right: 0;}
.split-on .tool{border-radius: 8px 0 0 8px;}
.split-on .drop{border-radius: 0 8px 8px 0; background-color: #e2e2e2;}
.drop{display: flex; align-items: center; justify-content: center; width: 24px; height: 48px;}
.sep{width: 2px; height: 36px; margin: 0 14px; background-color: #d2d2d2;}
.combo{height: 48px; margin-left: 2px; padding: 0 12px; border: 2px solid #bdbdbd; border-radius: 8px; appearance: none; font-family: inherit; font-size: 24px; color: #000;
  background: #fff url('data:image/svg+xml,<svg xmlns="http://www.w3.org/2000/svg" width="14" height="10"><path d="M2 2l5 6 5-6" fill="none" stroke="%23333" stroke-width="3"/></svg>') no-repeat right 7px center;}
.combo-font{width: 344px;}
.combo-size{width: 108px; margin: 0 1px 0 4px;}
.glyph{font-size: 26px; color: #3a3a3a;}
.glyph u{text-underline-offset: 4px;}
.glyph-i{font-family: "Liberation Mono", monospace; font-style: italic; font-size: 28px;}
.glyph-s{font-size: 23px;}
.glyph sup,.glyph sub{font-size: 15px; line-height: 15px; color: #1e8bcd;}
.glyph sup{align-self: flex-start; padding-top: 4px;}
.glyph sub{align-self: flex-end; padding-bottom: 6px;}
.glyph-av{flex-direction: column; font-size: 24px; line-height: 22px;}

/* thumbnails */
.main{display: flex; flex: 1; min-height: 0;}
.sidebar{width: 487px; border-right: 2px solid #c9c9c9; box-shadow: inset -7px 0 #f5f5f5;
  background: linear-gradient(rgba(200,200,205,0) 55%, rgba(195,195,215,0.3)), linear-gradient(90deg, #e1d6d8, #dfd1df 36px, #d5c5e0 120px, #d3c4e4 250px, #dccce2 300px, #e0dde3 380px, #e0dfe4);}
.slides{display: flex; flex-direction: column; gap: 37px; margin: 0; padding: 18px 0 0; list-style: none;}
.slides li{display: flex; align-items: flex-start;}
.slide-no{width: 42px; padding-top: 5px; font-size: 26px; color: #444;}
.thumb{width: 398px; aspect-ratio: 16 / 9; border: 2px solid #c9c9c9; border-radius: 9px; background-color: #fff;}
.thumb-on{padding: 58px 0 0 28px; outline: 6px solid #b8482b;}

/* editor */
.editor{display: grid; flex: 1; min-width: 0; grid-template-columns: 33px 1fr; grid-template-rows: 32px 1fr 87px;}
.corner{display: flex; align-items: center; justify-content: center; border-right: 2px solid #dcdcdc; border-bottom: 2px solid #dcdcdc; background-color: #fff;}
.ruler{width: 100%; height: 100%; background-color: #fff; overflow: visible;}
.ruler text{font: 17px "Noto Sans", sans-serif; fill: #6d6d6d; text-anchor: middle;}
.ruler-h{border-bottom: 2px solid #dcdcdc; position: relative; z-index: 1;}
.ruler-v{border-right: 2px solid #dcdcdc; min-height: 0;}
.stage{padding: 16px 0 0 16px; background-color: #f4f4f4; min-width: 0; min-height: 0;}
.canvas{position: relative; height: 100%; padding: 42px 189px 0 202px; background-color: #ebebeb; overflow: hidden;}
.slide{display: flex; flex-direction: column; gap: 22px; aspect-ratio: 16 / 9; padding: 65px 154px 125px 152px; background-color: #fff; box-shadow: 0 0 0 2px #d8d8d8, 0 10px 40px rgba(0,0,0,0.15);}
.holder-title{flex: 0 0 248px; display: flex; align-items: center; padding: 0 18px 12px;
  background:
    repeating-linear-gradient(90deg, #000 0 2px, transparent 2px 6px) top / 100% 2px no-repeat,
    repeating-linear-gradient(90deg, #000 0 2px, transparent 2px 6px) bottom / 100% 2px no-repeat,
    repeating-linear-gradient(#000 0 2px, transparent 2px 6px) left / 2px 100% no-repeat,
    repeating-linear-gradient(#000 0 2px, transparent 2px 6px) right / 2px 100% no-repeat;}
.holder-title h2{margin: 0; font: 400 92px/100px Lato, sans-serif; font-variant-ligatures: none;}
.holder-body{position: relative; flex: 1; padding: 3px 16px; border: 2px solid #666;}
.path{position: relative; margin: 0; padding-left: 41px; font: 400 59px/71px Lato, "Noto Sans CJK KR", sans-serif; white-space: nowrap;}
.path::before{content: "•"; position: absolute; left: -2px; font-size: 48px;}
.path i{font-style: normal;}
.jamo{display: inline-block; height: 67px; line-height: 46px; vertical-align: 4px; font-family: "Noto Sans CJK KR", sans-serif; font-size: 71px;}
.typo{background: url('data:image/svg+xml,<svg xmlns="http://www.w3.org/2000/svg" width="8" height="8"><path d="M-1 7l5-5 5 5" fill="none" stroke="red" stroke-width="2"/></svg>') repeat-x left bottom;}
.caret{display: inline-block; width: 2px; height: 50px; margin: 0 -1px; background-color: #ccc;}
.dash{display: inline-block; width: 49px; padding-left: 16px;}
.thumb .path{padding-left: 8px; font-size: 10px; line-height: 12px;}
.thumb .path::before{left: 0; font-size: 10px;}
.thumb .jamo{height: 11px; line-height: 8px; vertical-align: 1px; font-size: 13px;}
.thumb .typo{background: none;}
.thumb .dash{width: 8px; padding-left: 2px;}
.thumb .caret{display: none;}
.grip{position: absolute; width: 16px; height: 16px; margin: -8px; border: 2px solid #777; border-radius: 2px; background-color: #fff; box-shadow: 0 2px 4px rgba(0,0,0,0.25);}
.grip-nw,.grip-w,.grip-sw{left: -1px;}
.grip-n,.grip-s{left: 50%;}
.grip-ne,.grip-e,.grip-se{left: calc(100% + 1px);}
.grip-nw,.grip-n,.grip-ne{top: -1px;}
.grip-w,.grip-e{top: 50%;}
.grip-sw,.grip-s,.grip-se{top: calc(100% + 1px);}
.stem{position: absolute; left: 50%; top: -36px; width: 2px; height: 36px; margin-left: -1px; background-color: #888;}
.rotate{position: absolute; left: 50%; top: -56px; margin-left: -13px;}
.guide{position: absolute;}
.guide-v{left: calc(50% + 6px); top: 0; bottom: 6px; width: 2px; background: repeating-linear-gradient(#9a9a9a 0 8px, transparent 8px 12px);}
.guide-h{top: 672px; left: 0; right: 0; height: 2px; background: repeating-linear-gradient(90deg, #9a9a9a 0 8px, transparent 8px 12px);}
.notes{grid-column: 1 / 3; padding: 16px 15px; border-top: 2px solid #c9c9c9;}
.notes textarea{display: block; width: 100%; height: 34px; padding: 0; border: 0; background: none; resize: none; font: 26px/30px "Liberation Sans", Arial, sans-serif; color: #000;}

/* status bar */
.status{display: flex; align-items: center; height: 46px; padding: 0 36px 0 29px; border-top: 2px solid #a0a0a0; background: linear-gradient(#e2e2e2, #c6c6c6); font-size: 24px; color: #4a4a4a;}
.status button{display: flex; align-items: center;}
.status-slide{width: 168px;}
.status-lang{width: 300px;}
.status-a11y{gap: 7px;}
.status-right{display: flex; align-items: center; margin-left: auto; align-self: stretch;}
.status-notes,.status-comments{gap: 6px;}
.status-comments{margin: 0 20px 0 40px;}
.views{display: flex; align-self: stretch;}
.view{width: 72px; justify-content: center;}
.view-on{background-color: #9f9f9f;}
.zoom-btn{margin: 0 14px;}
.zoom{width: 200px; height: 32px; margin: 0; appearance: none; background: linear-gradient(#999, #999) no-repeat center / 100% 8px; border-radius: 4px;}
.zoom::-webkit-slider-thumb{appearance: none; width: 32px; height: 32px; border-radius: 50%; background-color: #fafafa; box-shadow: 0 1px 3px rgba(0,0,0,0.4);}
.zoom-level{margin: 0 40px 0 24px;}
```
FILE: script.js
```js
document.addEventListener("DOMContentLoaded", function () {

  const slide = document.getElementById('slide');
  const holder = document.getElementById('holder');
  const NS = 'http://www.w3.org/2000/svg';

  // thumbnail repeats the text of the slide
  document.getElementById('thumb-text').innerHTML = document.getElementById('path').innerHTML;

  const add = (svg, name, attrs, text) => {
    const el = document.createElementNS(NS, name);
    for (const key in attrs) el.setAttribute(key, attrs[key]);
    if (text !== undefined) el.textContent = text;
    svg.appendChild(el);
  };

  // len: slide size, start: slide edge, zero: origin, end: end of the white zone
  const drawRuler = (svg, vertical, o) => {
    const bar = (from, to, fill) => add(svg, 'rect', vertical
      ? {x: 0, y: from, width: 31, height: to - from, fill: fill}
      : {x: from, y: 0, width: to - from, height: 30, fill: fill});
    const tick = (pos, size, color) => add(svg, 'rect', vertical
      ? {x: 31 - size, y: pos - 1, width: size, height: 2, fill: color}
      : {x: pos - 1, y: 30 - size, width: 2, height: size, fill: color});

    bar(o.start, o.zero, '#dfdfdf');
    bar(o.end, o.start + o.len, '#dfdfdf');

    const first = Math.ceil((o.start - o.zero) / o.unit * 4);
    const last = Math.floor((o.start + o.len - o.zero) / o.unit * 4);
    for (let i = first; i <= last; i++) {
      if (i === 0) continue;
      const pos = Math.round(o.zero + i * o.unit / 4);
      tick(pos, Math.abs(i) % 4 === 2 ? 18 : 8, '#bdbdbd');
      if (i % 4 === 0) {
        add(svg, 'text', vertical
          ? {transform: 'translate(18 ' + pos + ') rotate(-90)'}
          : {x: pos, y: 16}, Math.abs(i / 4));
      }
    }
    [o.start, o.zero, o.end, o.start + o.len].forEach((p) => tick(Math.round(p), 30, '#bdbdbd'));
  };

  const s = slide.getBoundingClientRect();
  const b = holder.getBoundingClientRect();
  const unit = s.width / 33.8;
  const h = document.getElementById('ruler-h');
  const v = document.getElementById('ruler-v');
  const hx = h.getBoundingClientRect().left;
  const vy = v.getBoundingClientRect().top;
  const zero = Math.round(b.left - hx + 17);
  const end = Math.round(b.right - hx - 18);

  drawRuler(h, false, {start: s.left - hx, len: s.width, zero: zero, end: end, unit: unit});
  drawRuler(v, true, {start: s.top - vy, len: s.height, zero: b.top - vy + 6, end: b.top - vy + 220, unit: unit});

  // tab stops and indent markers
  const stop = Math.round(unit * 2.54);
  for (let x = zero + stop; x < end; x += stop) add(h, 'rect', {x: x, y: 33, width: 2, height: 6, fill: '#8a8a8a'});
  add(h, 'path', {d: 'M' + (zero - 10) + ' 0v3l10 9 10-9v-3z', fill: '#fff', stroke: '#8a8a8a'});
  add(h, 'path', {d: 'M' + (zero + 32) + ' 30v-6l10-9 10 9v6z', fill: '#fff', stroke: '#8a8a8a'});
  add(h, 'rect', {x: zero + 32, y: 31, width: 20, height: 11, rx: 3, fill: '#fff', stroke: '#8a8a8a'});
});
```
